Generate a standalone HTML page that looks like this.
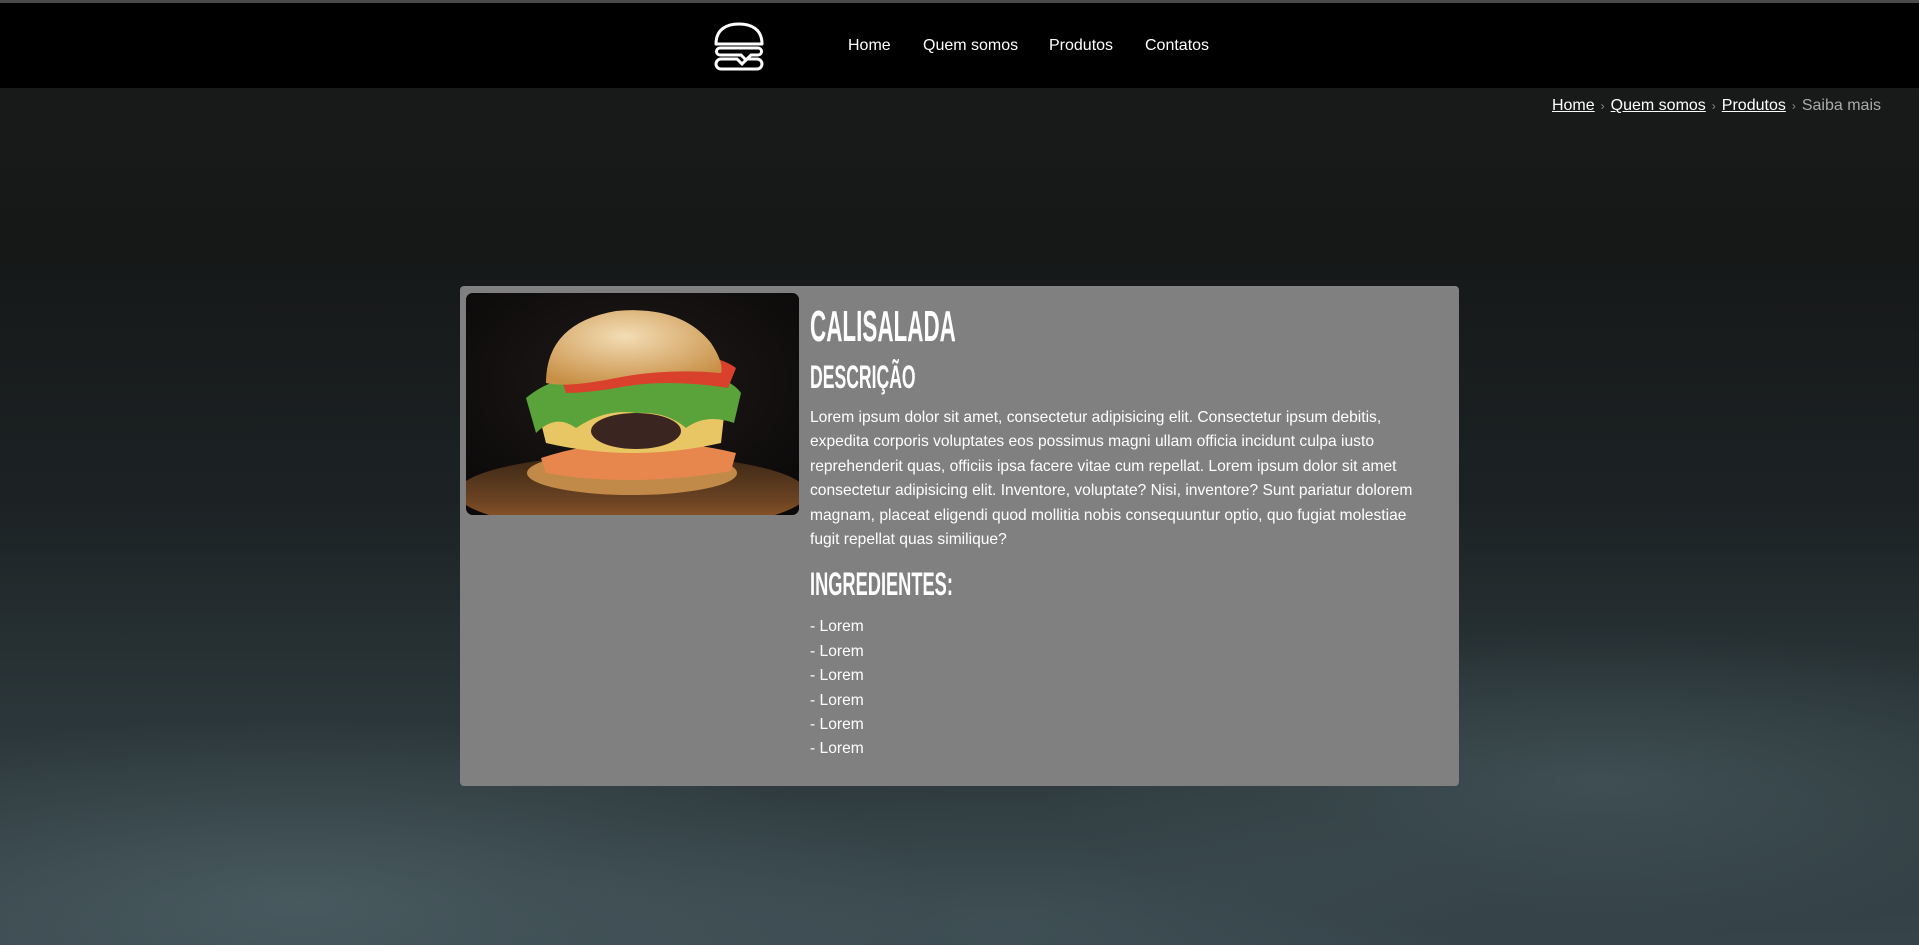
<!DOCTYPE html>
<html><head><meta charset="utf-8"><style>
*{margin:0;padding:0;box-sizing:border-box}
html,body{width:1919px;height:945px;overflow:hidden}
body{font-family:"Liberation Sans",sans-serif;color:#fff;position:relative;
background:
radial-gradient(ellipse 900px 260px at 300px 900px,rgba(110,135,140,.35),transparent 70%),
radial-gradient(ellipse 800px 220px at 1600px 780px,rgba(100,125,130,.3),transparent 70%),
radial-gradient(ellipse 700px 200px at 1000px 920px,rgba(90,115,120,.25),transparent 70%),
linear-gradient(180deg,#1a1b1b 0px,#161818 250px,#1c2224 500px,#2a3538 700px,#36444a 945px);}
.top{position:absolute;left:0;top:0;width:1919px;height:3px;background:#4a4a4a}
header{position:absolute;left:0;top:3px;width:1919px;height:85px;background:#000}
.logo{position:absolute;left:713px;top:18px}
nav a{position:absolute;top:34px;font-size:16px;color:#fff;text-decoration:none}
.bc{position:absolute;right:38px;top:97px;font-size:16px;color:#aaa}
.bc a{color:#fff;text-decoration:underline}
.bc .s{color:#888;margin:0 6px;font-size:12px}
.card{position:absolute;left:460px;top:286px;width:999px;height:500px;background:#808080;border-radius:4px}
.img{position:absolute;left:6px;top:7px;width:333px;height:222px;border-radius:7px;overflow:hidden;background:#111}
.txt{position:absolute;left:350px;top:0;width:625px}
.h{font-family:"Liberation Sans Narrow","Liberation Sans",sans-serif;font-weight:bold;display:inline-block;transform-origin:left top;white-space:nowrap}
p{font-size:15.6px;line-height:24.4px}
</style></head><body>
<div class="top"></div>
<header>
<svg class="logo" width="52" height="52" viewBox="0 0 52 52" fill="none" stroke="#fff" stroke-width="3">
<path d="M3 23 C3 8 14 3 26 3 C38 3 49 8 49 23 Z" stroke-linejoin="round"/>
<path d="M7 27 H45 A3.5 3.5 0 0 1 45 34 H38 L33 39 L28 34 H7 A3.5 3.5 0 0 1 7 27 Z"/>
<path d="M8 38 H24 L29 43 L34 38 H44 A5 5 0 0 1 44 48 H8 A5 5 0 0 1 8 38 Z"/>
</svg>
<nav><a style="left:848px">Home</a><a style="left:923px">Quem somos</a><a style="left:1049px">Produtos</a><a style="left:1145px">Contatos</a></nav>
</header>
<div class="bc"><a>Home</a><span class="s">›</span><a>Quem somos</a><span class="s">›</span><a>Produtos</a><span class="s">›</span>Saiba mais</div>
<div class="card">
<div class="img"><svg width="333" height="222" viewBox="0 0 333 222">
<defs><radialGradient id="bg" cx=".5" cy=".4" r=".7"><stop offset="0" stop-color="#1e1a18"/><stop offset="1" stop-color="#0b0909"/></radialGradient>
<linearGradient id="wood" x1="0" y1="0" x2="0" y2="1"><stop offset="0" stop-color="#3a2616"/><stop offset=".6" stop-color="#6b4322"/><stop offset="1" stop-color="#a0622c"/></linearGradient>
<radialGradient id="bun" cx=".45" cy=".35" r=".7"><stop offset="0" stop-color="#f3ddb5"/><stop offset="1" stop-color="#c88f45"/></radialGradient></defs>
<rect width="333" height="222" fill="url(#bg)"/>
<ellipse cx="166" cy="200" rx="175" ry="38" fill="url(#wood)"/>
<ellipse cx="166" cy="180" rx="105" ry="22" fill="#c28a48"/>
<path d="M75 165 Q166 135 270 160 L265 178 Q166 195 80 180Z" fill="#e7874e"/>
<path d="M70 110 Q166 85 260 105 L255 150 Q166 170 80 150Z" fill="#e9c664"/>
<ellipse cx="170" cy="138" rx="45" ry="18" fill="#3b2520"/>
<path d="M60 105 Q90 80 130 85 Q180 70 230 80 Q265 85 275 100 L268 130 Q240 120 220 135 Q200 118 170 120 Q140 115 110 135 Q90 120 70 140Z" fill="#5aa33a"/>
<path d="M95 85 Q140 65 200 60 Q250 60 270 75 L262 95 Q200 85 150 95 Q120 100 100 100Z" fill="#d9412c"/>
<path d="M80 90 Q80 30 150 18 Q215 12 245 50 Q258 70 255 80 Q200 75 150 85 Q100 95 80 90Z" fill="url(#bun)"/>
</svg></div>
<div class="txt">
<div class="h" style="font-size:44px;transform:scaleX(.51);margin-top:21px;height:40px;line-height:40px">CALISALADA</div><br>
<div class="h" style="font-size:32px;transform:scaleX(.55);margin-top:13px;height:34px;line-height:34px">DESCRIÇÃO</div>
<p style="margin-top:12px">Lorem ipsum dolor sit amet, consectetur adipisicing elit. Consectetur ipsum debitis, expedita corporis voluptates eos possimus magni ullam officia incidunt culpa iusto reprehenderit quas, officiis ipsa facere vitae cum repellat. Lorem ipsum dolor sit amet consectetur adipisicing elit. Inventore, voluptate? Nisi, inventore? Sunt pariatur dolorem magnam, placeat eligendi quod mollitia nobis consequuntur optio, quo fugiat molestiae fugit repellat quas similique?</p>
<div class="h" style="font-size:32px;transform:scaleX(.57);margin-top:15px;height:34px;line-height:34px">INGREDIENTES:</div>
<p style="margin-top:14px">- Lorem<br>- Lorem<br>- Lorem<br>- Lorem<br>- Lorem<br>- Lorem</p>
</div>
</div>
</body></html>
